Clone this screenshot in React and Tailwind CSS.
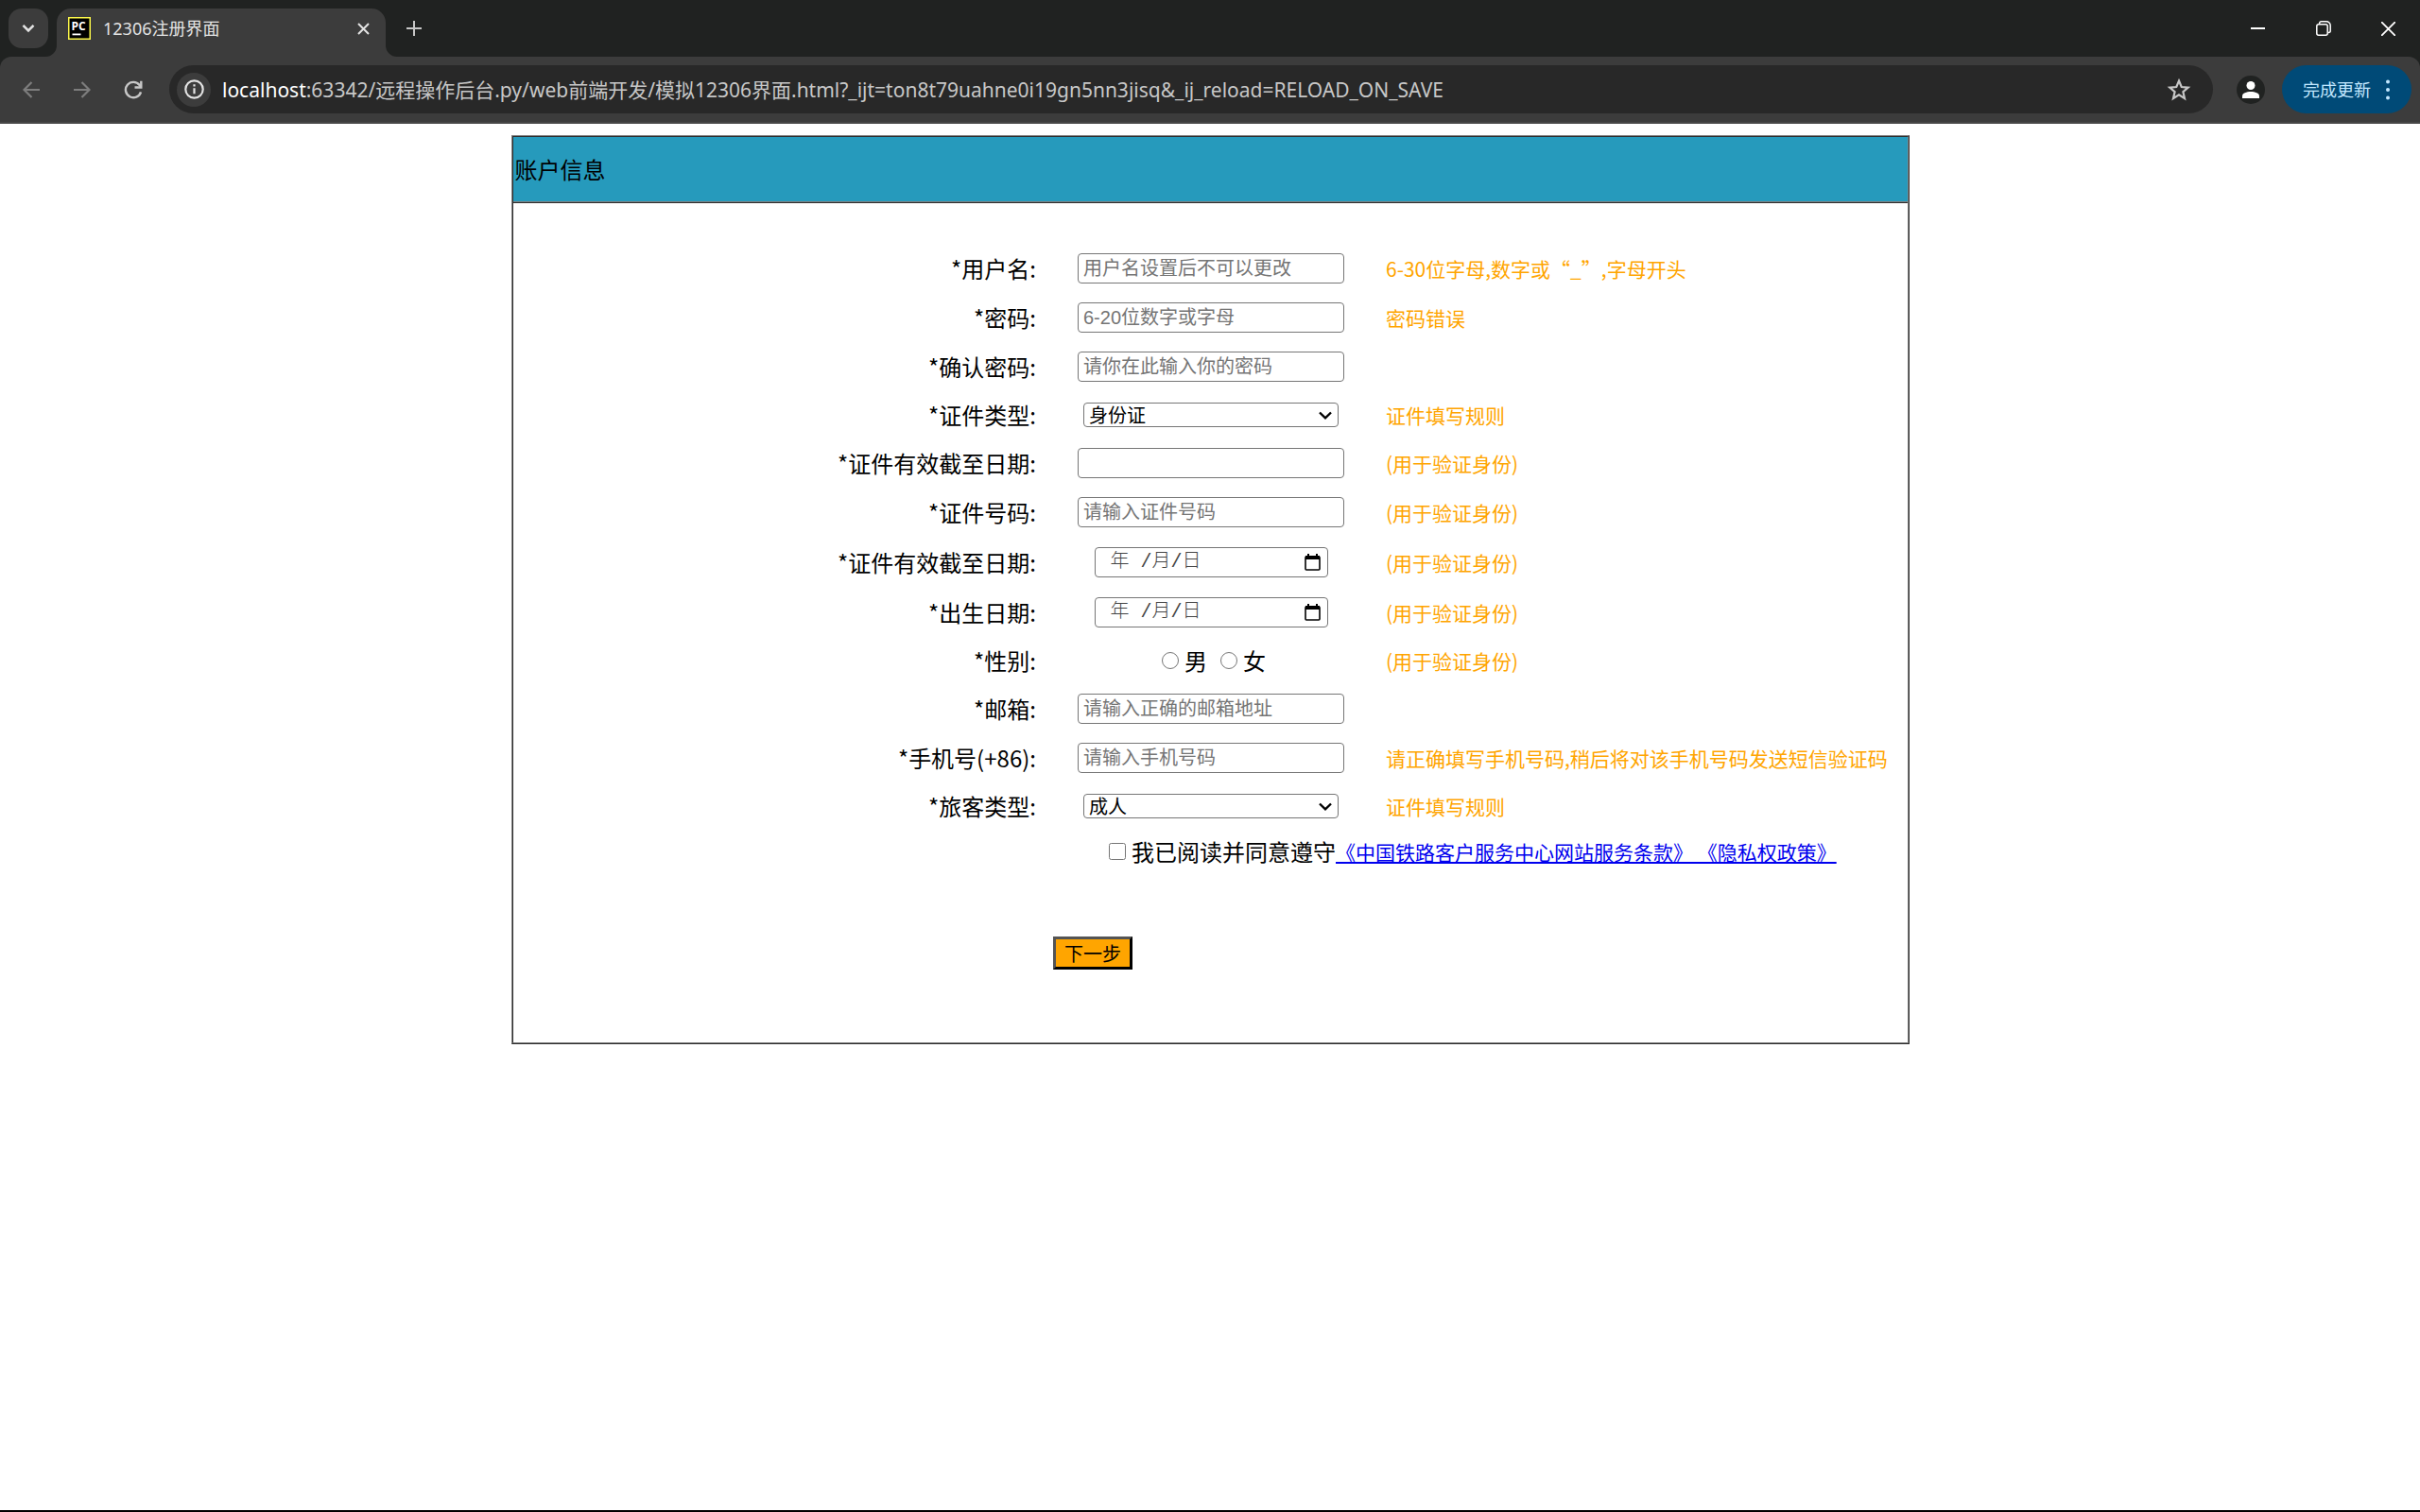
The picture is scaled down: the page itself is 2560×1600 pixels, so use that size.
import { useState } from 'react'

const ROWS = [
  { id: 'username', label: '用户名', type: 'text', placeholder: '用户名设置后不可以更改', hint: '6-30位字母,数字或“_”,字母开头' },
  { id: 'password', label: '密码', type: 'password', placeholder: '6-20位数字或字母', hint: '密码错误' },
  { id: 'confirm', label: '确认密码', type: 'password', placeholder: '请你在此输入你的密码' },
  { id: 'idType', label: '证件类型', type: 'select', options: ['身份证', '护照'], hint: '证件填写规则' },
  { id: 'idName', label: '证件有效截至日期', type: 'text', hint: '(用于验证身份)' },
  { id: 'idNumber', label: '证件号码', type: 'text', placeholder: '请输入证件号码', hint: '(用于验证身份)' },
  { id: 'idExpiry', label: '证件有效截至日期', type: 'date', hint: '(用于验证身份)' },
  { id: 'birthday', label: '出生日期', type: 'date', hint: '(用于验证身份)' },
  { id: 'gender', label: '性别', type: 'radio', options: ['男', '女'], hint: '(用于验证身份)' },
  { id: 'email', label: '邮箱', type: 'email', placeholder: '请输入正确的邮箱地址' },
  { id: 'phone', label: '手机号(+86)', type: 'tel', placeholder: '请输入手机号码', hint: '请正确填写手机号码,稍后将对该手机号码发送短信验证码' },
  { id: 'passenger', label: '旅客类型', type: 'select', options: ['成人', '儿童', '学生'], hint: '证件填写规则' },
]

const ROW_HEIGHT = {
  select: 'h-[50px]',
  radio: 'h-[50px]',
  date: 'h-[53px]',
}

function TabStrip() {
  return (
    <div className="flex h-[60px] items-end bg-[#202221]">
      <button aria-label="搜索标签页" className="mb-[9px] ml-[9px] flex size-[42px] items-center justify-center rounded-[14px] bg-[#3c3c3c]">
        <svg width="14" height="10" viewBox="0 0 14 10" fill="none" stroke="#e3e3e3" strokeWidth="2.6">
          <path d="M1.5 1.8 7 7.3l5.5-5.5" />
        </svg>
      </button>
      <div className="ml-[-3px] flex items-end">
        <svg className="size-3" viewBox="0 0 12 12" fill="#3c3c3c">
          <path d="M12 0v12H0A12 12 0 0 0 12 0z" />
        </svg>
        <div className="flex h-[51px] w-[348px] items-center rounded-t-[15px] bg-[#3c3c3c] pr-4 pl-3 pb-[9px]">
          <svg width="24" height="24" viewBox="0 0 24 24" aria-hidden="true">
            <rect x="0.75" y="0.75" width="22.5" height="22.5" fill="#000" stroke="#fcf84a" strokeWidth="1.5" />
            <text x="3.5" y="13.5" fill="#fff" className="font-['Open_Sans',sans-serif] text-[12px] font-bold">PC</text>
            <rect x="4.5" y="17.5" width="9" height="1.8" fill="#fff" />
          </svg>
          <span className="ml-[13px] grow text-[18px] leading-6 text-[#e3e3e3]">12306注册界面</span>
          <button aria-label="关闭标签页" className="flex size-4 items-center justify-center">
            <svg width="13" height="13" viewBox="0 0 13 13" stroke="#e3e3e3" strokeWidth="2">
              <path d="m1 1 11 11M12 1 1 12" />
            </svg>
          </button>
        </div>
        <svg className="size-3" viewBox="0 0 12 12" fill="#3c3c3c">
          <path d="M0 0v12h12A12 12 0 0 1 0 0z" />
        </svg>
      </div>
      <button aria-label="新标签页" className="mb-[9px] ml-[-3px] flex size-[42px] items-center justify-center">
        <svg width="16" height="16" viewBox="0 0 16 16" stroke="#c7c7c7" strokeWidth="2">
          <path d="M8 0v16M0 8h16" />
        </svg>
      </button>
      <div className="ml-auto flex h-full">
        <button aria-label="最小化" className="flex w-[69px] items-center justify-center">
          <svg width="15" height="15" viewBox="0 0 15 15" stroke="#fff" strokeWidth="2">
            <path d="M0 7h15" />
          </svg>
        </button>
        <button aria-label="还原" className="flex w-[69px] items-center justify-center">
          <svg width="16" height="16" viewBox="0 0 16 16" fill="none" stroke="#fff" strokeWidth="1.5">
            <rect x="0.8" y="3.8" width="11.4" height="11.4" rx="2" />
            <path d="M3.6 3V2.8a2 2 0 0 1 2-2H11a4.2 4.2 0 0 1 4.2 4.2v5.4a2 2 0 0 1-2 2H13" />
          </svg>
        </button>
        <button aria-label="关闭" className="flex w-[68px] items-center justify-center">
          <svg width="15" height="15" viewBox="0 0 15 15" stroke="#fff" strokeWidth="1.8">
            <path d="m0 0 15 15M15 0 0 15" />
          </svg>
        </button>
      </div>
    </div>
  )
}

function Toolbar() {
  const [path, setPath] = useState(':63342/远程操作后台.py/web前端开发/模拟12306界面.html?_ijt=ton8t79uahne0i19gn5nn3jisq&_ij_reload=RELOAD_ON_SAVE')

  return (
    <div className="bg-[#202221]">
      <div className="flex h-[71px] items-center rounded-t-[12px] border-b-2 border-[#474747] bg-[#3c3c3c] pr-[9px] pl-[23px]">
        <button aria-label="后退" className="flex size-5 items-center justify-center">
          <svg width="18" height="18" viewBox="0 0 18 18" fill="none" stroke="#7d7d7d" strokeWidth="2.2">
            <path d="M18 9H2M9.5 1 1.5 9l8 8" />
          </svg>
        </button>
        <button aria-label="前进" className="ml-[34px] flex size-5 items-center justify-center">
          <svg width="18" height="18" viewBox="0 0 18 18" fill="none" stroke="#7d7d7d" strokeWidth="2.2">
            <path d="M0 9h16M8.5 1l8 8-8 8" />
          </svg>
        </button>
        <button aria-label="重新加载" className="ml-[34px] flex size-5 items-center justify-center">
          <svg width="20" height="20" viewBox="0 0 20 20" fill="none" stroke="#c7c7c7" strokeWidth="2.4">
            <path d="M18 12.3A8.2 8.2 0 1 1 16.6 5L18 7" />
            <path d="M18.3 0.8V7.5H11.5" />
          </svg>
        </button>
        <div className="ml-7 flex h-[51px] grow items-center rounded-full bg-[#282828] pr-[23px] pl-2">
          <button aria-label="网站信息" className="flex size-9 shrink-0 items-center justify-center rounded-full bg-[#3c3c3c]">
            <svg width="21" height="21" viewBox="0 0 21 21" fill="none" stroke="#e3e3e3" strokeWidth="2.2">
              <circle cx="10.5" cy="10.5" r="9.2" />
              <path d="M10.5 9.2v6M10.5 5.2v2.2" />
            </svg>
          </button>
          <label htmlFor="url" className="ml-3 text-[21px] leading-8 text-white">localhost</label>
          <input
            id="url"
            value={path}
            onChange={e => setPath(e.target.value)}
            className="h-8 grow bg-transparent text-[21px] leading-8 text-[#c7c7c7] outline-none"
          />
          <button aria-label="为此标签页添加书签" className="size-[26px] shrink-0">
            <svg width="26" height="26" viewBox="0 0 26 26" fill="none" stroke="#c7c7c7" strokeWidth="2.2">
              <path d="m13 3.5 2.7 6.5 7 .6-5.300 4.600 1.600 6.900-6-3.700-6 3.700 1.600-6.900-5.300-4.600 7-.6z" />
            </svg>
          </button>
        </div>
        <button aria-label="个人资料" className="ml-[25px] flex size-[30px] items-center justify-center rounded-full bg-[#202221]">
          <svg width="18" height="18" viewBox="0 0 18 18" fill="#fff">
            <circle cx="9" cy="4.5" r="4.5" />
            <path d="M0 18v-2.5C0 12.5 4.500 11 9 11s9 1.500 9 4.500V18z" />
          </svg>
        </button>
        <button className="ml-[18px] flex h-[51px] items-center rounded-full bg-[#004a77] pr-[23px] pl-[22px] text-[18px] leading-6 text-[#c2e7ff]">
          完成更新
          <svg className="ml-4" width="4" height="22" viewBox="0 0 4 22" fill="#c2e7ff">
            <circle cx="2" cy="2.5" r="2" />
            <circle cx="2" cy="11" r="2" />
            <circle cx="2" cy="19.5" r="2" />
          </svg>
        </button>
      </div>
    </div>
  )
}

function Control({ row }) {
  if (row.type === 'select') {
    return (
      <div className="relative w-[270px]">
        <select id={row.id} className="h-[26px] w-full appearance-none rounded-[4px] border border-[#767676] bg-white px-[5px] text-[20px] leading-6 text-black">
          {row.options.map(o => <option key={o}>{o}</option>)}
        </select>
        <svg className="pointer-events-none absolute top-[9px] right-[7px]" width="14" height="9" viewBox="0 0 14 9" fill="none" stroke="#000" strokeWidth="2.4">
          <path d="M1 1.5 7 7.3l6-5.8" />
        </svg>
      </div>
    )
  }

  if (row.type === 'date') {
    return (
      <div className="flex h-8 w-[247px] items-center rounded-[4px] border border-[#767676] bg-white pr-[7px] pl-4">
        <input
          id={row.id}
          defaultValue="年 /月/日"
          className="w-0 grow bg-transparent font-['Liberation_Mono','Noto_Sans_CJK_SC',monospace] text-[20px] leading-6 font-light text-[#444] outline-none"
        />
        <button type="button" aria-label="选择日期">
          <svg width="17" height="18" viewBox="0 0 17 18" fill="none" stroke="#000" strokeWidth="1.6">
            <rect x="1" y="3" width="15" height="14" rx="1" />
            <path d="M1 2h15v4H1z" fill="#000" stroke="none" />
            <path d="M4 0v3M13 0v3" strokeWidth="2" />
          </svg>
        </button>
      </div>
    )
  }

  if (row.type === 'radio') {
    return (
      <div className="flex gap-[14px] pl-[6px] text-[24px] leading-8">
        {row.options.map(o => (
          <label key={o} className="flex items-center gap-[6px]">
            <input type="radio" name={row.id} className="size-[18px]" />
            {o}
          </label>
        ))}
      </div>
    )
  }

  return (
    <input
      id={row.id}
      type={row.type}
      placeholder={row.placeholder}
      className="h-8 w-full rounded-[4px] border border-[#767676] bg-white px-[5px] font-['Liberation_Sans','Noto_Sans_CJK_SC',sans-serif] text-[20px] placeholder:text-[#757575]"
    />
  )
}

function FormRow({ row }) {
  return (
    <div className={`grid grid-cols-[1fr_282px_1fr] items-center gap-x-11 ${ROW_HEIGHT[row.type] || 'h-[52px]'}`}>
      {row.type === 'radio' ? (
        <span className="text-right text-[24px] leading-8">*{row.label}:</span>
      ) : (
        <label htmlFor={row.id} className="text-right text-[24px] leading-8">*{row.label}:</label>
      )}
      <div className="flex justify-center">
        <Control row={row} />
      </div>
      <span className="text-[21px] leading-8 whitespace-nowrap text-[#ffa500]">{row.hint}</span>
    </div>
  )
}

export default function App() {
  return (
    <div lang="zh-CN" className="flex min-h-screen flex-col bg-white font-['Noto_Sans_CJK_SC',sans-serif] text-black">
      <header className="font-['Noto_Sans','Noto_Sans_CJK_SC',sans-serif]">
        <TabStrip />
        <Toolbar />
      </header>

      <main className="grow pt-3">
        <form onSubmit={e => e.preventDefault()} className="mx-auto w-full max-w-[1479px] border-2 border-[#808080] [border-style:ridge]">
          <h1 className="flex h-[70px] items-center border-b-2 border-[#808080] bg-[#269abc] pl-0.5 text-[24px] leading-8 [border-bottom-style:ridge]">账户信息</h1>

          <div className="pt-[43px] pb-[77px] pl-0.5">
            {ROWS.map(row => <FormRow key={row.id} row={row} />)}

            <div className="grid h-[46px] grid-cols-[1fr_282px_1fr] items-center gap-x-11">
              <div className="col-span-2 col-start-2 flex items-center pl-[33px] whitespace-nowrap">
                <input id="agree" type="checkbox" className="mr-[6px] size-[18px]" />
                <label htmlFor="agree" className="text-[24px] leading-8">我已阅读并同意遵守</label>
                <a href="#terms" className="text-[21px] leading-8 text-[#0000ee] underline">《中国铁路客户服务中心网站服务条款》 《隐私权政策》</a>
              </div>
            </div>

            <div className="mt-[67px] flex justify-center pr-[250px]">
              <button type="submit" className="h-[35px] w-[84px] border-[3px] border-black bg-[#ffa500] text-[20px] leading-7 [border-style:outset]">下一步</button>
            </div>
          </div>
        </form>
      </main>

      <footer className="h-[2px] bg-black" />
    </div>
  )
}
